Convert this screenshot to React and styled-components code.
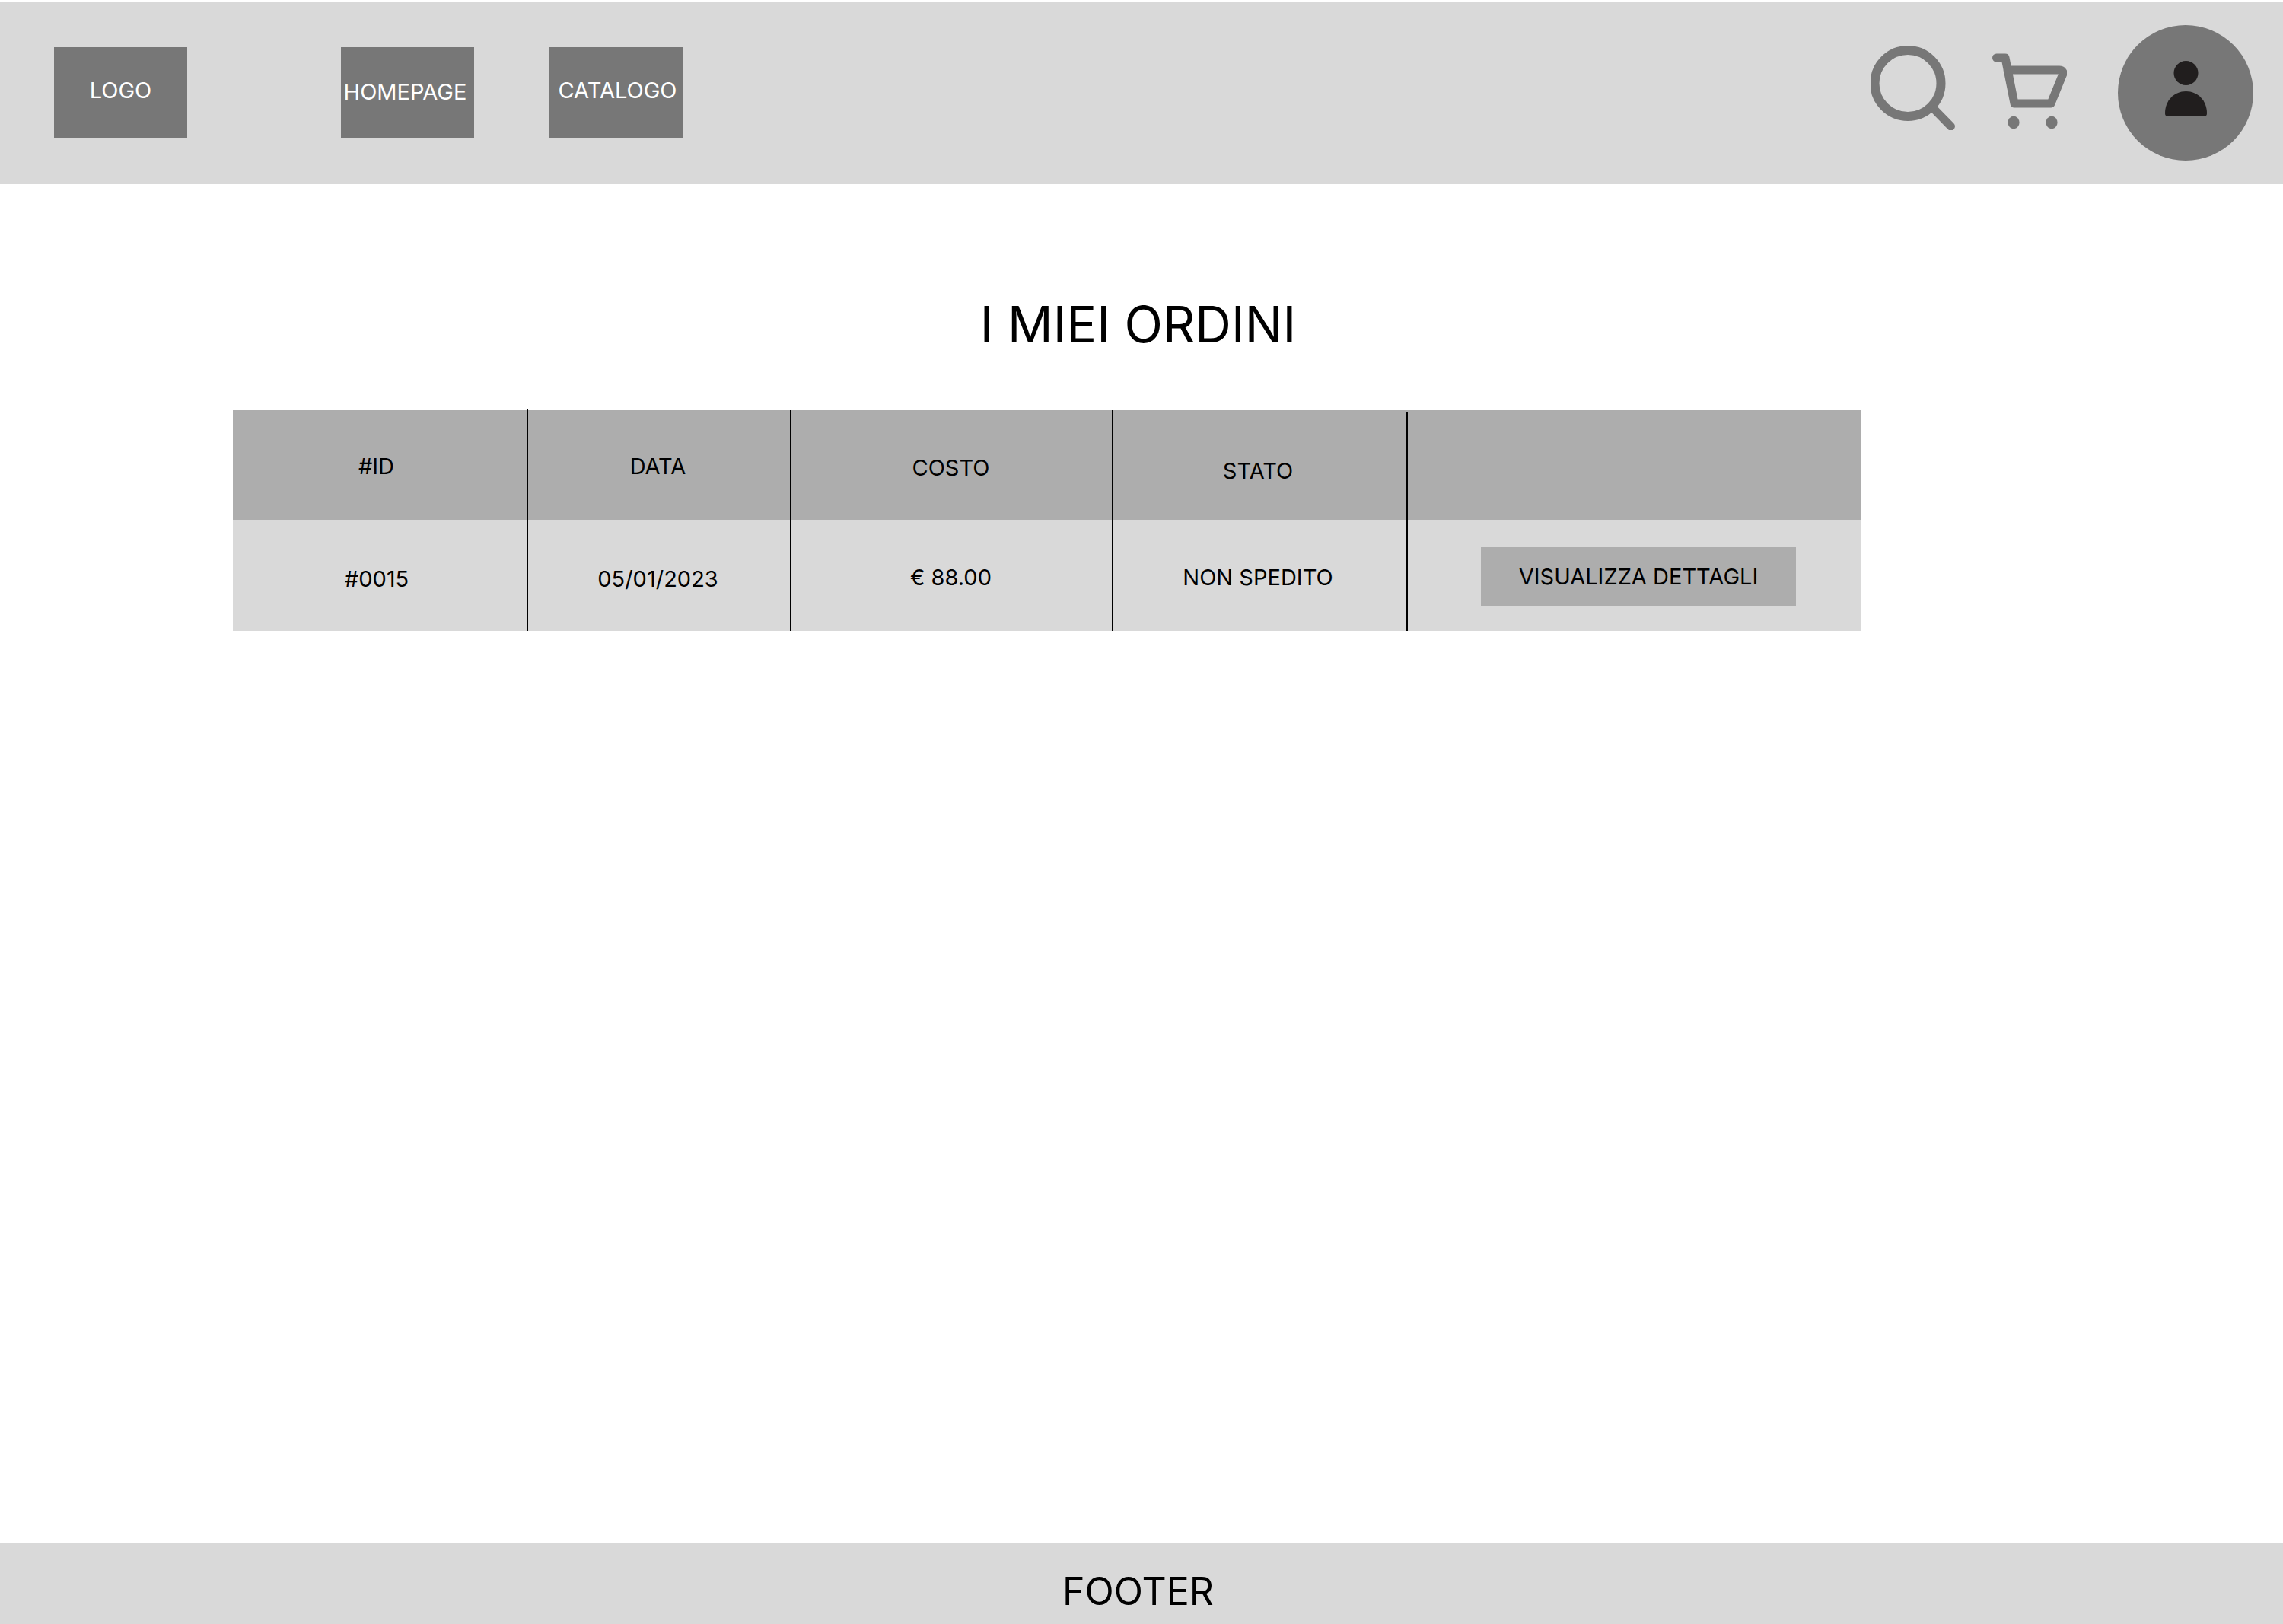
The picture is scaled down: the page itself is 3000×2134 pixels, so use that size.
import React from "react";
import styled, { createGlobalStyle } from "styled-components";

const Global = createGlobalStyle`
  html, body { margin: 0; padding: 0; background: #fff; }
  body { font-family: Inter, "Liberation Sans", sans-serif; color: #000; }
`;

const Page = styled.div`
  display: flex;
  flex-direction: column;
  height: 2134px;
  padding-top: 2px;
  box-sizing: border-box;
`;

const Header = styled.header`
  display: flex;
  align-items: center;
  box-sizing: border-box;
  height: 240px;
  flex: none;
  padding: 0 39px 1px 71px;
  background: #d9d9d9;
`;

const NavBox = styled.a`
  display: flex;
  align-items: center;
  justify-content: center;
  box-sizing: border-box;
  width: ${(p) => p.$w}px;
  height: 119px;
  margin-left: ${(p) => p.$ml}px;
  padding: ${(p) => p.$pad};
  background: #777777;
  color: #fff;
  font-size: 29px;
  white-space: nowrap;
`;

const Icons = styled.div`
  display: flex;
  align-items: center;
  margin-left: auto;
`;

const SearchIcon = styled.svg`
  width: 111px;
  height: 111px;
  margin-bottom: 13px;
`;

const CartIcon = styled.svg`
  width: 98px;
  height: 99px;
  margin: 0 67px 4px 49px;
`;

const Avatar = styled.div`
  display: flex;
  align-items: center;
  justify-content: center;
  box-sizing: border-box;
  width: 178px;
  height: 178px;
  padding-bottom: 11px;
  border-radius: 50%;
  background: #777777;
`;

const PersonIcon = styled.svg`
  width: 55px;
  height: 73px;
`;

const Main = styled.main`
  flex: 1;
  display: flex;
  flex-direction: column;
`;

const Title = styled.h1`
  margin: 0;
  padding: 144px 9px 0 0;
  height: 80px;
  box-sizing: content-box;
  font-size: 66px;
  line-height: 80px;
  font-weight: 400;
  text-align: center;
`;

const Table = styled.div`
  display: grid;
  grid-template-columns: 388px 346px 423px 387px 596px;
  width: 2140px;
  margin: 73px 0 0 306px;
`;

const Cell = styled.div`
  position: relative;
  display: flex;
  align-items: center;
  justify-content: center;
  box-sizing: border-box;
  height: ${(p) => (p.$head ? 144 : 146)}px;
  padding: ${(p) => p.$pad || 0};
  background: ${(p) => (p.$head ? "#adadad" : "#d9d9d9")};
  font-size: 29px;
  white-space: nowrap;
  ${(p) =>
    p.$line
      ? `&::after {
    content: "";
    position: absolute;
    right: 0;
    top: ${p.$lineTop || 0}px;
    bottom: 0;
    width: 2px;
    background: #000;
  }`
      : ""}
`;

const DetailButton = styled.button`
  display: flex;
  align-items: center;
  justify-content: center;
  width: 414px;
  height: 77px;
  padding: 0;
  border: 0;
  background: #adadad;
  color: #000;
  font: inherit;
`;

const Footer = styled.footer`
  display: flex;
  align-items: center;
  justify-content: center;
  box-sizing: border-box;
  flex: none;
  height: 107px;
  padding: 21px 9px 0 0;
  background: #d9d9d9;
  font-size: 50px;
`;

export default function App() {
  return (
    <>
      <Global />
      <Page>
        <Header>
          <NavBox $w={175} $ml={0} $pad="0 0 7px 0">LOGO</NavBox>
          <NavBox $w={175} $ml={202} $pad="0 6px 2px 0">HOMEPAGE</NavBox>
          <NavBox $w={177} $ml={98} $pad="0 0 7px 4px">CATALOGO</NavBox>
          <Icons>
            <SearchIcon viewBox="0 0 111 111" fill="none" stroke="#777777" strokeLinecap="round">
              <circle cx="49" cy="49.5" r="43.5" strokeWidth="12" />
              <path d="M84 84L105.5 106" strokeWidth="11" />
            </SearchIcon>
            <CartIcon viewBox="0 0 98 99" fill="none">
              <path
                d="M5.5 6H17L29 66H77L92.5 28C94 25 92 22 88 22H20"
                stroke="#777777"
                strokeWidth="11"
                strokeLinecap="round"
                strokeLinejoin="round"
              />
              <ellipse cx="28" cy="91" rx="7.6" ry="8.2" fill="#777777" />
              <ellipse cx="78" cy="91" rx="7.6" ry="8.2" fill="#777777" />
            </CartIcon>
            <Avatar>
              <PersonIcon viewBox="0 0 55 73" fill="#211e1e">
                <circle cx="27.5" cy="16" r="16" />
                <path d="M0 69C0 52 12 40 27.5 40C43 40 55 52 55 69Q55 73 51 73H4Q0 73 0 69Z" />
              </PersonIcon>
            </Avatar>
          </Icons>
        </Header>
        <Main>
          <Title>I MIEI ORDINI</Title>
          <Table>
            <Cell $head $line $lineTop={-2} $pad="3px 11px 0 0">#ID</Cell>
            <Cell $head $line $pad="3px 5px 0 0">DATA</Cell>
            <Cell $head $line $pad="7px 4px 0 0">COSTO</Cell>
            <Cell $head $line $lineTop={3} $pad="15px 7px 0 0">STATO</Cell>
            <Cell $head />
            <Cell $line $pad="9px 10px 0 0">#0015</Cell>
            <Cell $line $pad="9px 5px 0 0">05/01/2023</Cell>
            <Cell $line $pad="5px 4px 0 0">€ 88.00</Cell>
            <Cell $line $pad="5px 7px 0 0">NON SPEDITO</Cell>
            <Cell $pad="3px 0 0 10px"><DetailButton>VISUALIZZA DETTAGLI</DetailButton></Cell>
          </Table>
        </Main>
        <Footer>FOOTER</Footer>
      </Page>
    </>
  );
}
